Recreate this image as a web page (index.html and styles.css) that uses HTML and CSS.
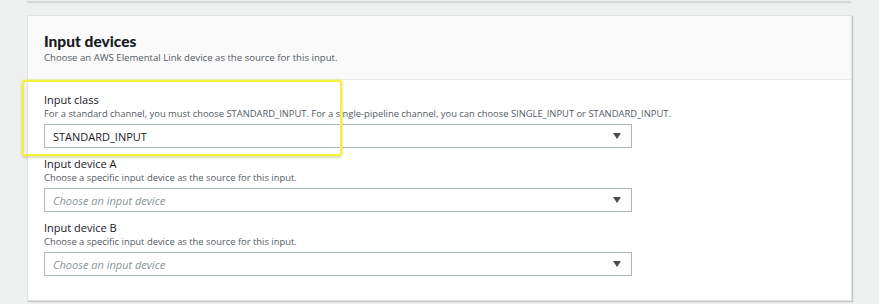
FILE: index.html
```html
<!DOCTYPE html>
<html lang="en">
<head>
    <meta charset="UTF-8">
    <title>Input devices</title>
    <link rel="stylesheet" href="styles.css">
</head>
<body>

    <div class="prev-card"></div>

    <section class="card">
        <header class="card-head">
            <h2>Input devices</h2>
            <p>Choose an AWS Elemental Link device as the source for this input.</p>
        </header>

        <div class="card-body">

            <div class="field">
                <label>Input class</label>
                <p class="hint">For a standard channel, you must choose STANDARD_INPUT. For a single-pipeline channel, you can choose SINGLE_INPUT or STANDARD_INPUT.</p>
                <div class="select">
                    <span class="value">STANDARD_INPUT</span>
                    <span class="arrow"></span>
                </div>
            </div>

            <div class="field">
                <label>Input device A</label>
                <p class="hint">Choose a specific input device as the source for this input.</p>
                <div class="select">
                    <span class="placeholder">Choose an input device</span>
                    <span class="arrow"></span>
                </div>
            </div>

            <div class="field">
                <label>Input device B</label>
                <p class="hint">Choose a specific input device as the source for this input.</p>
                <div class="select">
                    <span class="placeholder">Choose an input device</span>
                    <span class="arrow"></span>
                </div>
            </div>

        </div>

        <!-- annotation box drawn over the first field -->
        <div class="highlight"></div>
    </section>

</body>
</html>
```

FILE: styles.css
```css
body {
    margin: 0;
    background-color: #eef0ef;
    font-family: "Open Sans", "Noto Sans", sans-serif;
    color: #16191f;
    width: 879px;
    height: 304px;
    overflow: hidden;
}

.prev-card {
    margin-left: 27px;
    width: 824px;
    height: 1px;
    border-bottom: 1px solid #d5dbdb;
    box-shadow: 0 1px 1px rgba(0, 0, 0, 0.12);
}

.card {
    position: relative;
    margin: 13px 0 0 27px;
    width: 823px;
    background-color: #fff;
    border: 1px solid #e1e4e4;
    box-shadow: 1px 1px 1px rgba(0, 0, 0, 0.18);
}

.card-head {
    background-color: #fafafa;
    border-bottom: 1px solid #eaeded;
    padding: 15px 16px 12px;
    height: 36px;
}

.card-head h2 {
    margin: 0;
    font-family: Lato, "Open Sans", sans-serif;
    font-size: 15.5px;
    font-weight: 900;
    line-height: 20px;
}

.card-head p {
    margin: 0;
    font-size: 9.6px;
    line-height: 14px;
    color: #545b64;
}

.card-body {
    padding: 12px 16px 24px;
}

.field {
    margin-bottom: 8px;
}

.field:last-child {
    margin-bottom: 0;
}

.field label {
    display: block;
    font-size: 11px;
    line-height: 15px;
}

.hint {
    margin: 0 0 4px;
    font-size: 9.4px;
    line-height: 13px;
    color: #545b64;
}

.select {
    width: 568px;
    height: 22px;
    border: 1px solid #aab7b8;
    display: flex;
    align-items: center;
    justify-content: space-between;
    padding: 0 10px 0 8px;
    font-size: 11px;
}

.placeholder {
    font-style: italic;
    color: #879596;
}

.arrow {
    width: 0;
    height: 0;
    border-left: 4.5px solid transparent;
    border-right: 4.5px solid transparent;
    border-top: 6px solid #444b52;
}

.highlight {
    position: absolute;
    left: -6px;
    top: 64px;
    width: 316px;
    height: 72px;
    border: 2px solid #f1f23a;
    border-radius: 2px;
    box-shadow: 0 0 3px rgba(230, 230, 40, 0.6), 0 2px 3px rgba(0, 0, 0, 0.15);
}
```
